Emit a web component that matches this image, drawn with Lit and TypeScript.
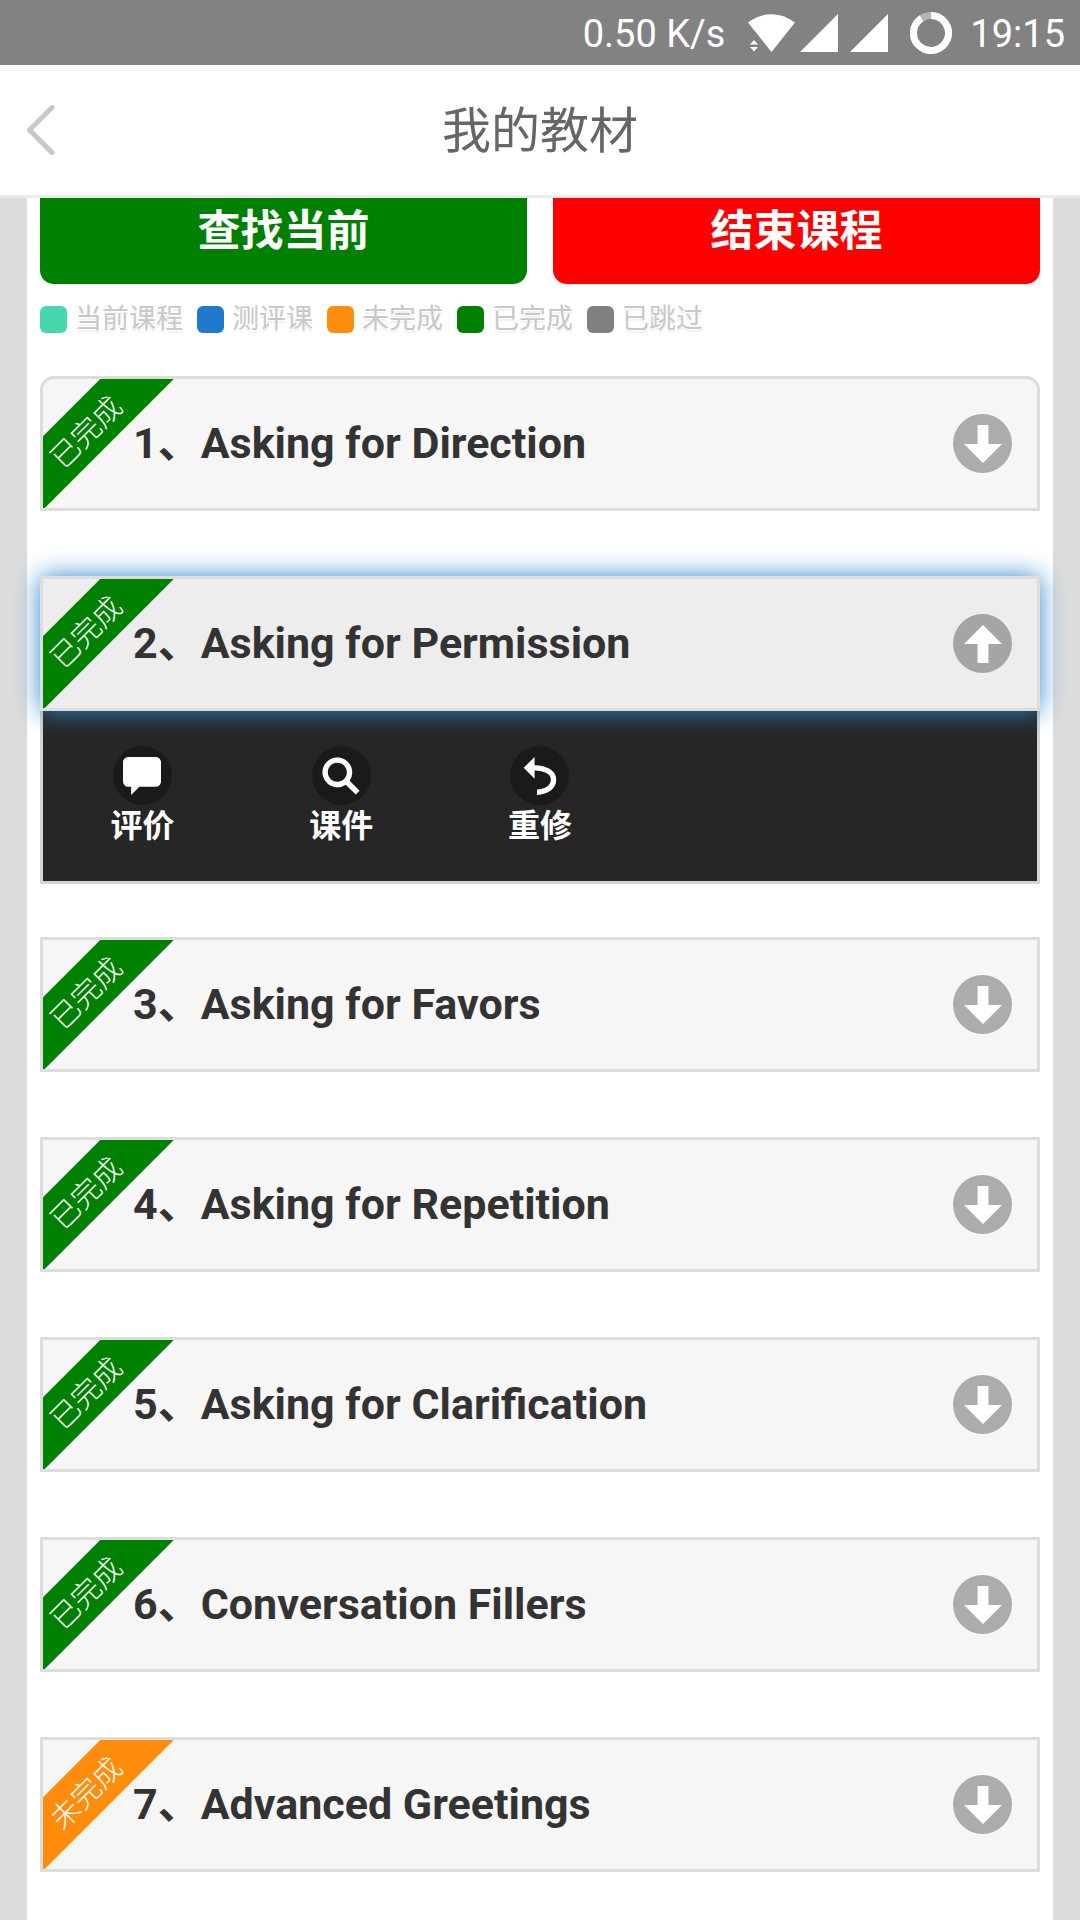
import { LitElement, html, css, svg } from "lit";
import { customElement, property, state } from "lit/decorators.js";
import { classMap } from "lit/directives/class-map.js";

type Status = "done" | "todo";

interface Lesson {
  id: number;
  title: string;
  status: Status;
}

const STATUS_TEXT: Record<Status, string> = {
  done: "已完成",
  todo: "未完成",
};

const LESSONS: Lesson[] = [
  { id: 1, title: "Asking for Direction", status: "done" },
  { id: 2, title: "Asking for Permission", status: "done" },
  { id: 3, title: "Asking for Favors", status: "done" },
  { id: 4, title: "Asking for Repetition", status: "done" },
  { id: 5, title: "Asking for Clarification", status: "done" },
  { id: 6, title: "Conversation Fillers", status: "done" },
  { id: 7, title: "Advanced Greetings", status: "todo" },
];

const LEGEND = [
  { kind: "current", text: "当前课程" },
  { kind: "test", text: "测评课" },
  { kind: "todo", text: "未完成" },
  { kind: "done", text: "已完成" },
  { kind: "skipped", text: "已跳过" },
];

const ICONS = {
  down: svg`<path d="M9,0H5v7H0l7,7l7-7H9z"/>`,
  up: svg`<path d="M7,0L0,7h5v7h4V7h5z"/>`,
  comment: svg`<path d="M12,0H2C0.9,0,0,0.9,0,2v7c0,1.1,0.9,2,2,2h1v3l3-3h6c1.1,0,2-0.9,2-2V2C14,0.9,13.1,0,12,0z"/>`,
  search: svg`<path d="M10.171,8.766c0.617-0.888,0.979-1.964,0.979-3.126c0-3.037-2.463-5.5-5.5-5.5s-5.5,2.463-5.5,5.5s2.463,5.5,5.5,5.5c1.152,0,2.223-0.355,3.104-0.962l3.684,3.683l1.414-1.414L10.171,8.766z M5.649,9.14c-1.933,0-3.5-1.567-3.5-3.5c0-1.933,1.567-3.5,3.5-3.5c1.933,0,3.5,1.567,3.5,3.5C9.149,7.572,7.582,9.14,5.649,9.14z"/>`,
  back: svg`<path d="M5,3V0L1,4l4,4V5C8.500,5,11,6.300,11,8.300C11,10.400,9,11.800,5.900,12v2C10,13.800,13,11.700,13,8.300C13,5,9.500,3,5,3z"/>`,
};

const ACTIONS: { icon: keyof typeof ICONS; text: string }[] = [
  { icon: "comment", text: "评价" },
  { icon: "search", text: "课件" },
  { icon: "back", text: "重修" },
];

@customElement("status-bar")
class StatusBar extends LitElement {
  static styles = css`
    :host {
      display: flex;
      align-items: center;
      justify-content: flex-end;
      height: 65px;
      padding: 0 15px;
      background: #828282;
      color: #fff;
      font-size: 38px;
      line-height: 44px;
    }
    .text {
      padding-top: 2px;
    }
    .icons {
      display: flex;
      align-items: center;
      gap: 12px;
      margin: 0 18px 0 23px;
    }
    .icon {
      display: block;
      fill: #fff;
    }
    .ring {
      margin-left: 10px;
    }
  `;

  render() {
    return html`
      <span class="text">0.50 K/s</span>
      <span class="icons">
        <svg class="icon" width="90" height="38" viewBox="0 0 90 38" aria-hidden="true">
          <path d="M0 8.500Q23.500-8 47 8.500L23.500 38z" />
          <path d="M2 30.500L6 26L10 30.500zM2 33L6 37.500L10 33z" />
          <path d="M90 0V38H52z" />
        </svg>
        <svg class="icon" width="38" height="38" viewBox="0 0 38 38" aria-hidden="true">
          <path d="M38 0V38H0z" />
        </svg>
        <svg class="icon ring" width="42" height="42" viewBox="0 0 42 42" aria-hidden="true">
          <circle cx="21" cy="21" r="17.500" fill="none" stroke="#b4b4b4" stroke-width="7" />
          <path d="M21 3.500A17.500 17.500 0 1 1 11.500 6.300" fill="none" stroke="#fff" stroke-width="7" />
        </svg>
      </span>
      <span class="text">19:15</span>
    `;
  }
}

@customElement("lesson-card")
class LessonCard extends LitElement {
  @property({ attribute: false }) lesson!: Lesson;
  @property({ type: Boolean }) first = false;
  @property({ type: Boolean }) open = false;

  static styles = css`
    :host {
      display: block;
    }
    .heading {
      margin: 0;
      font-size: 43px;
      line-height: 56px;
    }
    .toggle {
      position: relative;
      display: flex;
      align-items: center;
      justify-content: space-between;
      box-sizing: border-box;
      width: 100%;
      height: 135px;
      padding: 0 25px 0 90px;
      overflow: hidden;
      border: 3px solid #ddd;
      background: #f6f6f6;
      color: #333;
      font: inherit;
      font-weight: 700;
      text-align: left;
      cursor: pointer;
    }
    .toggle.first {
      border-radius: 14px 14px 0 0;
    }
    .toggle.open {
      z-index: 1;
      background: #ededed;
      box-shadow: 0 0 24px #38c;
    }
    .name {
      padding-bottom: 2px;
    }
    .ribbon {
      position: absolute;
      top: 21px;
      left: -53px;
      width: 200px;
      height: 52px;
      box-sizing: border-box;
      padding: 4px 14px 0 0;
      transform: rotate(-45deg);
      color: #fff;
      font-size: 29px;
      font-weight: 300;
      line-height: 48px;
      text-align: center;
    }
    .done {
      background: #008000;
    }
    .todo {
      background: #ff8c0a;
    }
    .disc {
      display: flex;
      align-items: center;
      justify-content: center;
      width: 59px;
      height: 59px;
      border-radius: 50%;
      background: rgba(0, 0, 0, 0.3);
    }
    .glyph {
      display: block;
      width: 38px;
      height: 38px;
      fill: #fff;
    }
    .panel {
      display: grid;
      grid-template-columns: repeat(5, 1fr);
      box-sizing: border-box;
      height: 173px;
      padding-top: 35px;
      border: 3px solid #d4d4d4;
      border-top: 0;
      background: #262626;
    }
    .action {
      display: flex;
      flex-direction: column;
      align-items: center;
      align-self: start;
      padding: 0;
      border: 0;
      background: none;
      color: #fff;
      font: inherit;
      font-size: 32px;
      font-weight: 700;
      line-height: 42px;
      cursor: pointer;
    }
  `;

  private toggle() {
    this.dispatchEvent(new CustomEvent("toggle-lesson", { detail: this.lesson.id }));
  }

  render() {
    const { id, title, status } = this.lesson;
    return html`
      <h2 class="heading">
        <button
          class=${classMap({ toggle: true, first: this.first, open: this.open })}
          type="button"
          aria-expanded=${this.open ? "true" : "false"}
          @click=${this.toggle}
        >
          <span class="ribbon ${status}">${STATUS_TEXT[status]}</span>
          <span class="name">${id}、${title}</span>
          <span class="disc">
            <svg class="glyph" viewBox="0 0 14 14" aria-hidden="true">
              ${this.open ? ICONS.up : ICONS.down}
            </svg>
          </span>
        </button>
      </h2>
      ${this.open
        ? html`<div class="panel">
            ${ACTIONS.map(
              (a) => html`<button class="action" type="button">
                <span class="disc">
                  <svg class="glyph" viewBox="0 0 14 14" aria-hidden="true">${ICONS[a.icon]}</svg>
                </span>
                <span>${a.text}</span>
              </button>`
            )}
          </div>`
        : null}
    `;
  }
}

@customElement("app-root")
class AppRoot extends LitElement {
  @state() private openId = 2;

  static styles = css`
    :host {
      display: flex;
      flex-direction: column;
      min-height: 100vh;
      background: #dcdcdc;
      font-family: Roboto, "Noto Sans CJK SC", sans-serif;
    }
    .header {
      display: grid;
      grid-template-columns: 1fr auto 1fr;
      align-items: center;
      height: 130px;
      padding: 0 27px;
      border-bottom: 3px solid #ebebf2;
      background: #fff;
    }
    .back {
      display: block;
      justify-self: start;
    }
    .chevron {
      display: block;
      fill: none;
      stroke: #c8c8c8;
      stroke-width: 5;
      stroke-linecap: round;
      stroke-linejoin: round;
    }
    .title {
      margin: 0;
      padding-top: 4px;
      color: #666;
      font-size: 49px;
      font-weight: 400;
      line-height: 64px;
    }
    .view {
      display: flex;
      flex: 1;
      flex-direction: column;
      overflow: hidden;
      padding: 0 27px;
    }
    .sheet {
      flex: 1;
      padding: 0 13px 40px;
      background: #fff;
    }
    .buttons {
      display: grid;
      grid-template-columns: 1fr 1fr;
      gap: 26px;
      margin-top: -22px;
    }
    .button {
      height: 108px;
      padding: 2px 0 0;
      border: 0;
      border-radius: 14px;
      color: #fff;
      font: inherit;
      font-size: 43px;
      font-weight: 700;
      line-height: 56px;
      cursor: pointer;
    }
    .legend {
      display: flex;
      flex-wrap: wrap;
      gap: 14px;
      margin: 14px 0 35px;
      padding: 0;
      list-style: none;
      color: #c8c8c8;
      font-size: 27px;
      line-height: 43px;
      text-shadow: 0 3px 0 #f3f3f3;
    }
    .entry {
      display: flex;
      align-items: center;
      gap: 8px;
    }
    .swatch {
      width: 27px;
      height: 27px;
      border-radius: 6px;
    }
    .current {
      background: #46d7af;
    }
    .test {
      background: #1f7acb;
    }
    .todo {
      background: #ff8c0a;
    }
    .done {
      background: #008000;
    }
    .skipped {
      background: #808080;
    }
    .end {
      background: #f00;
    }
    .lessons {
      display: flex;
      flex-direction: column;
      gap: 65px;
    }
    .expanded {
      margin-bottom: -12px;
    }
  `;

  private onToggle(e: CustomEvent<number>) {
    this.openId = this.openId === e.detail ? 0 : e.detail;
  }

  render() {
    return html`
      <status-bar></status-bar>
      <header class="header">
        <a class="back" href="#" aria-label="返回">
          <svg class="chevron" width="28" height="50" viewBox="0 0 28 50" aria-hidden="true">
            <path d="M25 2.500L2.500 25L25 47.500" />
          </svg>
        </a>
        <h1 class="title">我的教材</h1>
      </header>
      <main class="view">
        <div class="sheet">
          <div class="buttons">
            <button class="button done" type="button">查找当前</button>
            <button class="button end" type="button">结束课程</button>
          </div>
          <ul class="legend">
            ${LEGEND.map(
              (l) => html`<li class="entry"><span class="swatch ${l.kind}"></span>${l.text}</li>`
            )}
          </ul>
          <div class="lessons">
            ${LESSONS.map(
              (l, i) => html`<lesson-card
                class=${classMap({ expanded: l.id === this.openId })}
                .lesson=${l}
                ?first=${i === 0}
                ?open=${l.id === this.openId}
                @toggle-lesson=${this.onToggle}
              ></lesson-card>`
            )}
          </div>
        </div>
      </main>
    `;
  }
}
